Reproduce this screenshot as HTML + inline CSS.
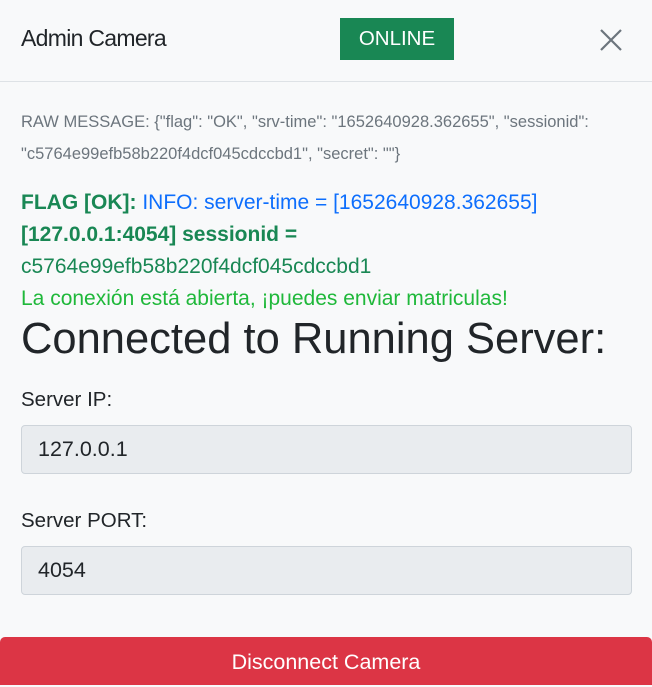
<!DOCTYPE html>
<html><head><meta charset="utf-8"><style>
*{margin:0;padding:0;box-sizing:border-box}
body{width:652px;height:685px;background:#f8f9fa;font-family:"Liberation Sans",sans-serif;position:relative;overflow:hidden;color:#212529}
.hdr{position:absolute;left:0;top:0;width:652px;height:82px;border-bottom:1px solid #dee2e6}
.title{position:absolute;left:21px;top:25px;font-size:23px;letter-spacing:-0.7px;color:#212529}
.badge{position:absolute;left:340px;top:18px;width:114px;height:42px;background:#198754;color:#fff;font-size:20.5px;text-align:center;line-height:42px}
.x{position:absolute;left:600px;top:29px}
.raw{position:absolute;left:21px;top:106px;width:630px;font-size:16.5px;line-height:32px;color:#6c757d;white-space:nowrap}
.msg{position:absolute;left:21px;top:187px;font-size:21px;line-height:32px;white-space:nowrap}
.b{color:#198754;font-weight:bold}
.blue{color:#0d6efd}
.g{color:#198754}
.lg{color:#1fb83a}
h1{position:absolute;left:21px;top:315px;font-size:43.5px;font-weight:normal;color:#212529;white-space:nowrap}
.lab{position:absolute;left:21px;font-size:20.5px;color:#212529}
.inp{position:absolute;left:21px;width:611px;height:49px;background:#e9ecef;border:1px solid #ced4da;border-radius:4px;font-size:21.5px;padding-left:16px;line-height:47px;color:#212529}
.btn{position:absolute;left:0;top:637px;width:652px;height:48px;background:#dc3545;border-radius:5px 5px 0 0;color:#fff;font-size:21.5px;text-align:center;line-height:50px}
</style></head><body>
<div class="hdr">
<div class="title">Admin Camera</div>
<div class="badge">ONLINE</div>
<svg class="x" width="22" height="22" viewBox="0 0 22 22"><path d="M1 1L21 21M21 1L1 21" stroke="#6c757d" stroke-width="2.2"/></svg>
</div>
<div class="raw">RAW MESSAGE: {"flag": "OK", "srv-time": "1652640928.362655", "sessionid":<br>"c5764e99efb58b220f4dcf045cdccbd1", "secret": ""}</div>
<div class="msg"><span class="b">FLAG [OK]:</span> <span class="blue">INFO: server-time = [1652640928.362655]</span><br><span class="b">[127.0.0.1:4054] sessionid =</span><br><span class="g">c5764e99efb58b220f4dcf045cdccbd1</span><br><span class="lg">La conexión está abierta, ¡puedes enviar matriculas!</span></div>
<h1>Connected to Running Server:</h1>
<div class="lab" style="top:388px">Server IP:</div>
<div class="inp" style="top:425px">127.0.0.1</div>
<div class="lab" style="top:509px">Server PORT:</div>
<div class="inp" style="top:546px">4054</div>
<div class="btn">Disconnect Camera</div>
</body></html>
